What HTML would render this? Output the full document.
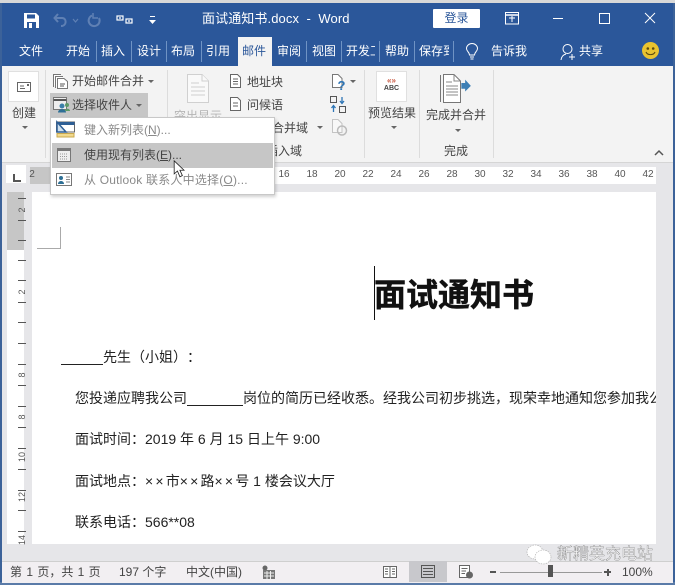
<!DOCTYPE html>
<html><head><meta charset="utf-8"><style>
html,body{margin:0;padding:0;width:675px;height:585px;overflow:hidden;background:#e6e6e9}
body{position:relative;font-family:"Liberation Sans","Noto Sans CJK SC",sans-serif;color:#333;text-spacing-trim:space-all}
.a{position:absolute;white-space:nowrap}
.tab{position:absolute;top:43px;font-size:12px;line-height:16px;color:#fff;white-space:nowrap}
.sep{position:absolute;top:41px;width:1px;height:21px;background:#6f93c4}
.rs{position:absolute;top:70px;width:1px;height:88px;background:#dcdcdc}
.t{position:absolute;font-size:12px;line-height:16px;color:#444;white-space:nowrap}
.d{position:absolute;font-size:14px;line-height:18px;color:#222;white-space:nowrap}
.x{letter-spacing:2.2px}
.rn{position:absolute;top:169px;font-size:10px;line-height:12px;color:#555;width:20px;text-align:center}
.vt{position:absolute;left:18px;width:8px;height:1px;background:#555}
.vn{position:absolute;left:13px;width:18px;text-align:center;font-size:9px;line-height:10px;color:#555;transform:rotate(-90deg)}
.arr{position:absolute;width:0;height:0;border-left:3px solid transparent;border-right:3px solid transparent;border-top:3px solid #666}
.st{position:absolute;top:564px;font-size:12px;line-height:16px;color:#444;white-space:nowrap}
svg{position:absolute;overflow:visible}
</style></head><body>
<!-- top blue -->
<div class="a" style="left:0;top:0;width:675px;height:3px;background:#d8d8d8"></div>
<div class="a" style="left:1px;top:3px;width:673px;height:63px;background:#2b579a"></div>
<div class="a" style="left:0;top:3px;width:2px;height:580px;background:#3c6299"></div>
<div class="a" style="left:673px;top:3px;width:2px;height:580px;background:#3c6299"></div>
<div class="a" style="left:0;top:582px;width:675px;height:3px;background:#5a7ba8"></div>

<!-- QAT -->
<svg style="left:24px;top:13px" width="15" height="15" viewBox="0 0 15 15"><path d="M0 0H12L15 3V15H0Z" fill="#fff"/><rect x="3" y="1.5" width="8" height="4" fill="#2b579a"/><rect x="3" y="9" width="9" height="6" fill="#2b579a"/><rect x="5" y="10" width="3" height="5" fill="#fff"/></svg>
<svg style="left:53px;top:13px" width="26" height="15" viewBox="0 0 26 15" fill="none" stroke="#5f80b4" stroke-width="2"><path d="M2 5H9C14 5 14 13 8 13"/><path d="M5 1L1.500 5L5 9"/><path d="M20 6L22.500 9L25 6" stroke-width="1.200"/></svg>
<svg style="left:87px;top:12px" width="15" height="16" viewBox="0 0 15 16" fill="none" stroke="#5f80b4" stroke-width="2"><path d="M5 3.500A5.500 5.500 0 1 0 12 6"/><path d="M6 1V6H11" stroke-width="1.500"/></svg>
<svg style="left:116px;top:15px" width="17" height="9" viewBox="0 0 17 9" fill="none" stroke="#fff" stroke-width="1.200"><rect x="1" y="1" width="6" height="4"/><rect x="10" y="4" width="6" height="4"/><path d="M3 3H5M12 6H14"/></svg>
<svg style="left:149px;top:16px" width="7" height="8" viewBox="0 0 7 8" fill="#fff"><rect x="1" y="0" width="5" height="1"/><path d="M0 4H7L3.500 8Z"/></svg>
<div class="a" style="left:202px;top:10px;font-size:13px;line-height:18px;color:#fff;letter-spacing:.1px">面试通知书.docx&nbsp; -&nbsp; Word</div>
<div class="a" style="left:433px;top:9px;width:47px;height:19px;background:#fff;border-radius:1px;color:#2b579a;font-size:12px;line-height:19px;text-align:center">登录</div>
<svg style="left:505px;top:12px" width="14" height="13" viewBox="0 0 14 13" fill="none" stroke="#fff"><rect x=".5" y=".5" width="13" height="11.500"/><path d="M0 3H14" stroke-width="1.500"/><path d="M4 6H10M7 4V10"/></svg>
<div class="a" style="left:553px;top:18px;width:10px;height:1px;background:#fff"></div>
<div class="a" style="left:599px;top:13px;width:9px;height:9px;border:1px solid #fff"></div>
<svg style="left:644px;top:12px" width="12" height="12" viewBox="0 0 12 12" stroke="#fff" stroke-width="1"><path d="M1 1L11 11M11 1L1 11"/></svg>

<!-- tabs -->
<div class="tab" style="left:19px">文件</div>
<div class="tab" style="left:66px">开始</div><div class="sep" style="left:96px"></div>
<div class="tab" style="left:101px">插入</div><div class="sep" style="left:131px"></div>
<div class="tab" style="left:137px">设计</div><div class="sep" style="left:166px"></div>
<div class="tab" style="left:171px">布局</div><div class="sep" style="left:201px"></div>
<div class="tab" style="left:206px">引用</div>
<div class="a" style="left:238px;top:37px;width:34px;height:30px;background:#f3f3f3"></div>
<div class="tab" style="left:242px;color:#2b579a">邮件</div>
<div class="tab" style="left:277px">审阅</div><div class="sep" style="left:306px"></div>
<div class="tab" style="left:312px">视图</div><div class="sep" style="left:341px"></div>
<div class="tab" style="left:346px;width:29px;overflow:hidden">开发工</div><div class="sep" style="left:379px"></div>
<div class="tab" style="left:385px">帮助</div><div class="sep" style="left:414px"></div>
<div class="tab" style="left:419px;width:30px;overflow:hidden">保存到</div><div class="sep" style="left:453px"></div>
<svg style="left:465px;top:43px" width="14" height="17" viewBox="0 0 14 17" fill="none" stroke="#fff" stroke-width="1"><path d="M4.500 12C4.500 9 1.500 8.500 1.500 5.500A5.500 5 0 0 1 12.500 5.500C12.500 8.500 9.500 9 9.500 12Z"/><path d="M5 14H9M5.500 16H8.500"/></svg>
<div class="tab" style="left:491px">告诉我</div>
<svg style="left:560px;top:43px" width="18" height="18" viewBox="0 0 18 18" fill="none" stroke="#fff" stroke-width="1"><circle cx="7.500" cy="6" r="4.500"/><path d="M1 17C1.500 13 4 11.500 6 11"/><path d="M9 14H15M12 11V17"/></svg>
<div class="tab" style="left:579px">共享</div>
<svg style="left:642px;top:42px" width="17" height="17" viewBox="0 0 17 17"><circle cx="8.500" cy="8.500" r="8.500" fill="#e9c32f"/><circle cx="5.800" cy="6.500" r="1.300" fill="#5b4a10"/><circle cx="11.200" cy="6.500" r="1.300" fill="#5b4a10"/><path d="M4 10C5.500 13.500 11.500 13.500 13 10" fill="none" stroke="#5b4a10" stroke-width="1.100"/></svg>

<!-- ribbon -->
<div class="a" style="left:2px;top:66px;width:671px;height:96px;background:#f3f3f3;border-bottom:1px solid #d5d5d5"></div>
<div class="rs" style="left:45px"></div>
<div class="rs" style="left:167px"></div>
<div class="rs" style="left:364px"></div>
<div class="rs" style="left:419px"></div>
<div class="rs" style="left:493px"></div>
<!-- 创建 -->
<div class="a" style="left:8px;top:71px;width:29px;height:29px;background:#fff;border:1px solid #e0e0e0"></div>
<svg style="left:17px;top:82px" width="14" height="10" viewBox="0 0 14 10" fill="none" stroke="#666"><rect x=".5" y=".5" width="13" height="9"/><path d="M3 4H7M3 6.500H8"/><rect x="10" y="2" width="2" height="2" fill="#666" stroke="none"/></svg>
<div class="t" style="left:12px;top:105px;color:#444">创建</div>
<div class="arr" style="left:22px;top:126px"></div>
<!-- 开始邮件合并 -->
<svg style="left:53px;top:74px" width="15" height="15" viewBox="0 0 15 15" fill="#fff" stroke="#777"><path d="M.5 13V.5H8"/><path d="M2.500 14V2.500H10"/><path d="M4.500 14.500V4.500H11L14.500 7.500V14.500Z"/><path d="M7 10H12M7 12H11" stroke="#555"/></svg>
<div class="t" style="left:72px;top:73px">开始邮件合并</div>
<div class="arr" style="left:148px;top:80px"></div>
<!-- 选择收件人 -->
<div class="a" style="left:50px;top:93px;width:98px;height:24px;background:#c6c6c6"></div>
<svg style="left:53px;top:97px" width="17" height="16" viewBox="0 0 17 16"><rect x=".5" y=".5" width="13" height="12" fill="#eee" stroke="#777"/><path d="M.5 3H13.500" stroke="#555" stroke-width="2"/><circle cx="9" cy="9" r="2.500" fill="#3b7fa8"/><path d="M5 15.500C5 11 13 11 13 15.500Z" fill="#2e6f95"/><circle cx="14" cy="8" r="2" fill="#5d9a68"/><path d="M12 14C12 11 17 11 17 14Z" fill="#5d9a68"/></svg>
<div class="t" style="left:72px;top:97px">选择收件人</div>
<div class="arr" style="left:136px;top:104px"></div>
<!-- 突出显示 -->
<svg style="left:187px;top:74px" width="22" height="29" viewBox="0 0 22 29" fill="#f9f9f9" stroke="#d0d0d0"><path d="M.5.500H15L21.500 7V28.500H.5Z"/><path d="M15 .5V7H21.500M4 9H12M4 13H18M4 17H18M4 21H18"/></svg>
<div class="t" style="left:174px;top:108px;color:#b5b5b5">突出显示</div>
<!-- 地址块/问候语 -->
<svg style="left:230px;top:74px" width="11" height="14" viewBox="0 0 11 14" fill="#fff" stroke="#666"><path d="M.5.500H7.500L10.500 3.500V13.500H.5Z"/><path d="M3 5H8M3 7.500H8M3 10H8"/></svg>
<div class="t" style="left:247px;top:74px">地址块</div>
<svg style="left:230px;top:97px" width="11" height="14" viewBox="0 0 11 14" fill="#fff" stroke="#666"><path d="M.5.500H7.500L10.500 3.500V13.500H.5Z"/><path d="M3 6H8M3 9H8"/></svg>
<div class="t" style="left:247px;top:97px">问候语</div>
<div class="t" style="left:272px;top:120px">合并域</div>
<div class="arr" style="left:317px;top:126px"></div>
<div class="t" style="left:266px;top:143px">插入域</div>
<!-- right small icons -->
<svg style="left:332px;top:74px" width="13" height="17" viewBox="0 0 13 17" fill="#fff" stroke="#777"><path d="M.5.500H6L10 4.500V13.500H.5Z"/><text x="5.500" y="16" font-size="13" font-weight="700" fill="#2e75b6" stroke="none" font-family="Liberation Sans">?</text></svg>
<div class="arr" style="left:350px;top:80px"></div>
<svg style="left:330px;top:96px" width="16" height="17" viewBox="0 0 16 17" fill="none"><rect x=".5" y=".5" width="6" height="6" stroke="#555"/><rect x="9.500" y="10.500" width="6" height="6" stroke="#555"/><path d="M12 1V7M10 5L12 7.500L14 5M3.500 16V10M1.500 12L3.500 9.500L5.500 12" stroke="#2e75b6" stroke-width="1.300"/></svg>
<svg style="left:332px;top:119px" width="15" height="17" viewBox="0 0 15 17" fill="#f8f8f8" stroke="#c4c4c4"><path d="M.5.500H6L10 4.500V13.500H.5Z"/><circle cx="10" cy="11.500" r="4.500" fill="none" stroke="#bbb" stroke-width="1.500"/></svg>
<!-- 预览结果 -->
<div class="a" style="left:376px;top:71px;width:29px;height:29px;background:#fff;border:1px solid #e0e0e0"></div>
<div class="a" style="left:376px;top:76px;width:31px;text-align:center;font:700 8px/9px 'Liberation Sans',sans-serif;color:#c8553d">«»</div>
<div class="a" style="left:376px;top:85px;width:31px;text-align:center;font:700 7px/8px 'Liberation Sans',sans-serif;color:#444">ABC</div>
<div class="t" style="left:368px;top:105px">预览结果</div>
<div class="arr" style="left:391px;top:126px"></div>
<!-- 完成并合并 -->
<svg style="left:440px;top:74px" width="33" height="29" viewBox="0 0 33 29" fill="#fff"><path d="M.5 1V28" stroke="#777" fill="none"/><path d="M3.500.500H14L20.500 7V28.500H3.500Z" stroke="#777"/><path d="M14 .5V7H20.500M6 8H12M6 12H18M6 15H18M6 18H18M6 21H18" stroke="#888" fill="none"/><path d="M23 10H27V6.500L33 13L27 19V16H23Z" fill="#3d7fb5" transform="translate(-.5 -.5) scale(.95)"/></svg>
<div class="t" style="left:426px;top:107px">完成并合并</div>
<div class="arr" style="left:455px;top:129px"></div>
<div class="t" style="left:444px;top:143px">完成</div>
<svg style="left:654px;top:150px" width="10" height="6" viewBox="0 0 10 6" fill="none" stroke="#555" stroke-width="1.500"><path d="M1 5L5 1L9 5"/></svg>

<!-- ruler -->
<div class="a" style="left:6px;top:165px;width:20px;height:18px;background:#fff"></div>
<div class="a" style="left:13px;top:174px;width:2px;height:8px;background:#555"></div>
<div class="a" style="left:13px;top:180px;width:8px;height:2px;background:#555"></div>
<div class="a" style="left:30px;top:167px;width:626px;height:17px;background:#fff"></div>
<div class="a" style="left:30px;top:167px;width:22px;height:17px;background:#c6c6c6"></div>
<div class="rn" style="left:22px">2</div>
<div class="rn" style="left:274px">16</div>
<div class="rn" style="left:302px">18</div>
<div class="rn" style="left:330px">20</div>
<div class="rn" style="left:358px">22</div>
<div class="rn" style="left:386px">24</div>
<div class="rn" style="left:414px">26</div>
<div class="rn" style="left:442px">28</div>
<div class="rn" style="left:470px">30</div>
<div class="rn" style="left:498px">32</div>
<div class="rn" style="left:526px">34</div>
<div class="rn" style="left:554px">36</div>
<div class="rn" style="left:582px">38</div>
<div class="rn" style="left:610px">40</div>
<div class="rn" style="left:638px">42</div>

<!-- vertical ruler -->
<div class="a" style="left:7px;top:192px;width:17px;height:352px;background:#fff"></div>
<div class="a" style="left:7px;top:192px;width:17px;height:58px;background:#c6c6c6"></div>
<div class="vt" style="top:198px"></div><div class="vn" style="top:205px">2</div><div class="vt" style="top:220px"></div><div class="vt" style="top:240px"></div>
<div class="vt" style="top:260px"></div><div class="vt" style="top:280px"></div><div class="vn" style="top:287px">2</div><div class="vt" style="top:302px"></div>
<div class="vt" style="top:322px"></div><div class="vt" style="top:343px"></div>
<div class="vt" style="top:364px"></div><div class="vn" style="top:370px">8</div><div class="vt" style="top:385px"></div>
<div class="vt" style="top:406px"></div><div class="vn" style="top:412px">8</div><div class="vt" style="top:427px"></div>
<div class="vt" style="top:448px"></div><div class="vn" style="top:452px">10</div><div class="vt" style="top:469px"></div>
<div class="vt" style="top:490px"></div><div class="vn" style="top:492px">12</div><div class="vt" style="top:510px"></div>
<div class="vt" style="top:531px"></div><div class="vn" style="top:535px">14</div>

<!-- page -->
<div class="a" style="left:32px;top:192px;width:624px;height:352px;background:#fff;overflow:hidden">
  <div class="a" style="left:5px;top:56px;width:23px;height:1px;background:#aaa"></div>
  <div class="a" style="left:28px;top:35px;width:1px;height:22px;background:#aaa"></div>
  <div class="a" style="left:342px;top:74px;width:1px;height:54px;background:#111"></div>
  <div class="a" style="left:342px;top:84px;font-size:32px;line-height:38px;font-weight:700;color:#111;-webkit-text-stroke:.5px #111">面试通知书</div>
  <div class="d" style="left:29px;top:156px"><span style="display:inline-block;width:42px;height:14px;border-bottom:1px solid #222;vertical-align:-3px"></span>先生（小姐）：</div>
  <div class="d" style="left:43px;top:197px">您投递应聘我公司<span style="display:inline-block;width:56px;height:14px;border-bottom:1px solid #222;vertical-align:-3px"></span>岗位的简历已经收悉。经我公司初步挑选，现荣幸地通知您参加我公司</div>
  <div class="d" style="left:43px;top:238px">面试时间：2019 年 6 月 15 日上午 9:00</div>
  <div class="d" style="left:43px;top:280px">面试地点：<span class="x">××</span>市<span class="x">××</span>路<span class="x">××</span>号 1 楼会议大厅</div>
  <div class="d" style="left:43px;top:321px">联系电话：566**08</div>
</div>

<!-- dropdown -->
<div class="a" style="left:50px;top:117px;width:223px;height:76px;background:#fff;border:1px solid #c8c8c8;box-shadow:1px 2px 3px rgba(0,0,0,.18)"></div>
<div class="a" style="left:52px;top:143px;width:221px;height:25px;background:#c6c6c6"></div>
<svg style="left:56px;top:121px" width="19" height="17" viewBox="0 0 19 17" fill="none"><rect x=".5" y="1" width="18" height="10" fill="#fff" stroke="#666"/><path d="M.5 1H18.500V4H.5Z" fill="#2e5f95"/><path d="M1 1L10 11H1Z" fill="#cfe0ee" stroke="#2e5f95" stroke-width="1.500"/><rect x="1" y="12.500" width="17" height="3.500" fill="#f2d98c" stroke="#c9a94e"/></svg>
<div class="t" style="left:84px;top:122px;color:#8a8a8a">键入新列表(<u>N</u>)...</div>
<svg style="left:57px;top:148px" width="14" height="14" viewBox="0 0 14 14"><rect x=".5" y=".5" width="13" height="13" fill="#eee" stroke="#777"/><rect x="1" y="1" width="12" height="2" fill="#777"/><path d="M3 6H11M3 8.500H11M3 11H11" stroke="#999" stroke-dasharray="1 1"/></svg>
<div class="t" style="left:84px;top:147px;color:#444">使用现有列表(<u>E</u>)...</div>
<svg style="left:56px;top:173px" width="16" height="13" viewBox="0 0 16 13"><rect x=".5" y=".5" width="15" height="12" fill="#fff" stroke="#777"/><circle cx="5" cy="5" r="2" fill="#2e6f95"/><path d="M2 11C2 7 8 7 8 11Z" fill="#2e6f95"/><path d="M10 4H14M10 6.500H14M10 9H14" stroke="#888"/></svg>
<div class="t" style="left:84px;top:172px;color:#8a8a8a;letter-spacing:.2px">从 Outlook 联系人中选择(<u>O</u>)...</div>
<svg style="left:173px;top:160px" width="13" height="18" viewBox="0 0 15 22"><path d="M1 1V17L5 13.500L8 20.500L11 19L8 12.500H13Z" fill="#fff" stroke="#222" stroke-width="1"/></svg>

<!-- status bar -->
<div class="a" style="left:2px;top:561px;width:671px;height:21px;background:#f2eff2;border-top:1px solid #cfcfcf"></div>
<div class="st" style="left:10px;word-spacing:1px">第 1 页，共 1 页</div>
<div class="st" style="left:119px">197 个字</div>
<div class="st" style="left:186px">中文(中国)</div>
<svg style="left:262px;top:565px" width="13" height="14" viewBox="0 0 13 14"><circle cx="3" cy="3" r="2.500" fill="#666"/><rect x="1" y="5" width="12" height="9" fill="#777"/><path d="M2 8H12M2 11H12M5 6V14M8.500 6V14" stroke="#eee"/></svg>
<svg style="left:383px;top:566px" width="14" height="12" viewBox="0 0 14 12" fill="#fff" stroke="#666"><path d="M.5.500H7V11.500H.5ZM7 .5H13.500V11.500H7Z"/><path d="M2 3H5M2 5.500H5M2 8H5M9 3H12M9 5.500H12M9 8H12"/></svg>
<div class="a" style="left:409px;top:561px;width:38px;height:21px;background:#c8c8cc"></div>
<svg style="left:421px;top:565px" width="14" height="13" viewBox="0 0 14 13" fill="none" stroke="#555"><rect x=".5" y=".5" width="13" height="12"/><path d="M2 3.500H12M2 6.500H12M2 9.500H12"/></svg>
<svg style="left:459px;top:565px" width="15" height="14" viewBox="0 0 15 14" fill="#fff" stroke="#666"><path d="M.5.500H10.500V12.500H.5Z"/><path d="M2.500 3.500H8.500M2.500 6H7M2.500 8.500H6"/><circle cx="10.500" cy="10" r="3.500" fill="#666" stroke="none"/></svg>
<div class="a" style="left:490px;top:571px;width:6px;height:2px;background:#555"></div>
<div class="a" style="left:500px;top:572px;width:102px;height:1px;background:#999"></div>
<div class="a" style="left:548px;top:565px;width:5px;height:12px;background:#555"></div>
<div class="a" style="left:604px;top:571px;width:7px;height:2px;background:#555"></div>
<div class="a" style="left:606.500px;top:568.500px;width:2px;height:7px;background:#555"></div>
<div class="a" style="left:622px;top:564px;font-size:12px;line-height:16px;color:#444">100%</div>

<!-- watermark -->
<svg style="left:526px;top:544px" width="26" height="22" viewBox="0 0 26 22" fill="#fff" stroke="#aaa" stroke-width=".6" stroke-dasharray="1.500 1"><ellipse cx="9" cy="8" rx="8" ry="7"/><ellipse cx="17" cy="13" rx="8" ry="7"/></svg>
<div class="a" style="left:557px;top:545px;font-size:16px;line-height:20px;color:#f4f4f4;-webkit-text-stroke:.25px #555">新精英充电站</div>
</body></html>
